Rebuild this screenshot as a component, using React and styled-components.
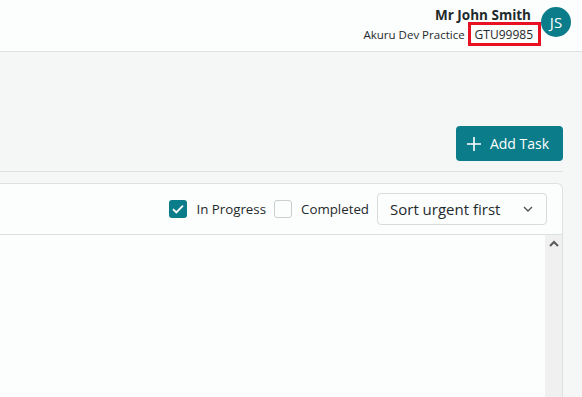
import styled, { createGlobalStyle } from "styled-components"

const GlobalStyle = createGlobalStyle`
    html, body {
        margin: 0;
        padding: 0;
        background: #f5f6f6;
        font-family: 'Open Sans', 'Noto Sans', sans-serif;
        color: #1f2a2c;
    }
    * { box-sizing: border-box; }
`

export default function App() {
    return (
        <>
            <GlobalStyle />
            <Pagina>
                <Header>
                    <Usuario>
                        <Nome>Mr John Smith</Nome>
                        <Pratica>
                            Akuru Dev Practice
                            <Codigo>GTU99985</Codigo>
                        </Pratica>
                    </Usuario>
                    <Avatar>JS</Avatar>
                </Header>
                <Conteudo>
                    <Acoes>
                        <BotaoAdicionar>
                            <svg width="16" height="16" viewBox="0 0 16 16">
                                <path d="M8 1v14M1 8h14" stroke="#fff" strokeWidth="1.6" />
                            </svg>
                            Add Task
                        </BotaoAdicionar>
                    </Acoes>
                    <Divisor />
                    <Cartao>
                        <Filtros>
                            <Opcao>
                                <Caixa $marcado>
                                    <svg width="12" height="10" viewBox="0 0 12 10">
                                        <path d="M1 5.2l3.3 3.2L11 1.6" stroke="#fff" strokeWidth="1.8" fill="none" />
                                    </svg>
                                </Caixa>
                                In Progress
                            </Opcao>
                            <Opcao>
                                <Caixa />
                                Completed
                            </Opcao>
                            <Selecao>
                                Sort urgent first
                                <svg width="10" height="6" viewBox="0 0 10 6">
                                    <path d="M1 1l4 4 4-4" stroke="#555" strokeWidth="1.4" fill="none" />
                                </svg>
                            </Selecao>
                        </Filtros>
                        <Corpo>
                            <Lista />
                            <BarraRolagem>
                                <svg width="10" height="7" viewBox="0 0 10 7">
                                    <path d="M1 6l4-4 4 4" stroke="#5a5a5a" strokeWidth="2" fill="none" />
                                </svg>
                            </BarraRolagem>
                        </Corpo>
                    </Cartao>
                </Conteudo>
            </Pagina>
        </>
    )
}

const Pagina = styled.div`
    width: 582px;
    height: 397px;
    overflow: hidden;
    display: flex;
    flex-direction: column;
`

const Header = styled.div`
    height: 52px;
    flex-shrink: 0;
    background: #fcfdfd;
    border-bottom: 1px solid #dde1e1;
    display: flex;
    justify-content: flex-end;
    align-items: flex-start;
    padding: 7px 11px 0 0;
    gap: 10px;
`

const Usuario = styled.div`
    display: flex;
    flex-direction: column;
    align-items: flex-end;
    padding-top: 1px;
`

const Nome = styled.div`
    font-size: 13.5px;
    font-weight: 700;
    line-height: 14px;
    color: #1f2a2c;
`

const Pratica = styled.div`
    display: flex;
    align-items: center;
    gap: 3px;
    font-size: 11.5px;
    line-height: 15px;
    color: #1f2a2c;
`

const Codigo = styled.span`
    font-size: 12px;
    border: 3px solid #e81123;
    padding: 2px 5px 1px 4px;
    margin-right: -10px;
    position: relative;
    z-index: 1;
`

const Avatar = styled.div`
    width: 30px;
    height: 30px;
    border-radius: 50%;
    background: #0b7c89;
    color: #fff;
    font-size: 15px;
    display: flex;
    align-items: center;
    justify-content: center;
`

const Conteudo = styled.div`
    flex: 1;
    display: flex;
    flex-direction: column;
    padding-right: 19px;
`

const Acoes = styled.div`
    display: flex;
    justify-content: flex-end;
    padding-top: 74px;
`

const BotaoAdicionar = styled.button`
    height: 35px;
    width: 107px;
    background: #0b7c89;
    color: #fff;
    border: none;
    border-radius: 4px;
    font-family: 'Open Sans', 'Noto Sans', sans-serif;
    font-size: 14px;
    display: flex;
    align-items: center;
    justify-content: center;
    gap: 8px;
    padding: 0 10px 0 6px;
`

const Divisor = styled.div`
    height: 1px;
    background: #dde1e1;
    margin-top: 10px;
`

const Cartao = styled.div`
    margin-top: 11px;
    margin-bottom: -2px;
    flex: 1;
    background: #fcfdfd;
    border: 1px solid #dde1e1;
    border-left: none;
    border-bottom: none;
    border-radius: 0 6px 0 0;
    display: flex;
    flex-direction: column;
`

const Filtros = styled.div`
    height: 51px;
    flex-shrink: 0;
    border-bottom: 1px solid #dde1e1;
    display: flex;
    justify-content: flex-end;
    align-items: center;
    padding-right: 15px;
    gap: 8px;
`

const Opcao = styled.label`
    display: flex;
    align-items: center;
    gap: 9px;
    font-size: 13.3px;
    color: #1f2a2c;
`

const Caixa = styled.span`
    width: 18px;
    height: 18px;
    border-radius: 3px;
    background: ${p => (p.$marcado ? "#0b7c89" : "#fcfdfd")};
    border: ${p => (p.$marcado ? "none" : "1.5px solid #c9cece")};
    display: flex;
    align-items: center;
    justify-content: center;
`

const Selecao = styled.div`
    width: 170px;
    height: 32px;
    border: 1px solid #d6dbdb;
    border-radius: 4px;
    background: #fcfdfd;
    display: flex;
    align-items: center;
    justify-content: space-between;
    padding: 0 13px 0 12px;
    font-size: 15px;
    color: #1f2a2c;
`

const Corpo = styled.div`
    flex: 1;
    display: flex;
`

const Lista = styled.div`
    flex: 1;
    background: #fcfdfd;
`

const BarraRolagem = styled.div`
    width: 17px;
    background: #f0f0f0;
    display: flex;
    justify-content: center;
    padding-top: 5px;
`
